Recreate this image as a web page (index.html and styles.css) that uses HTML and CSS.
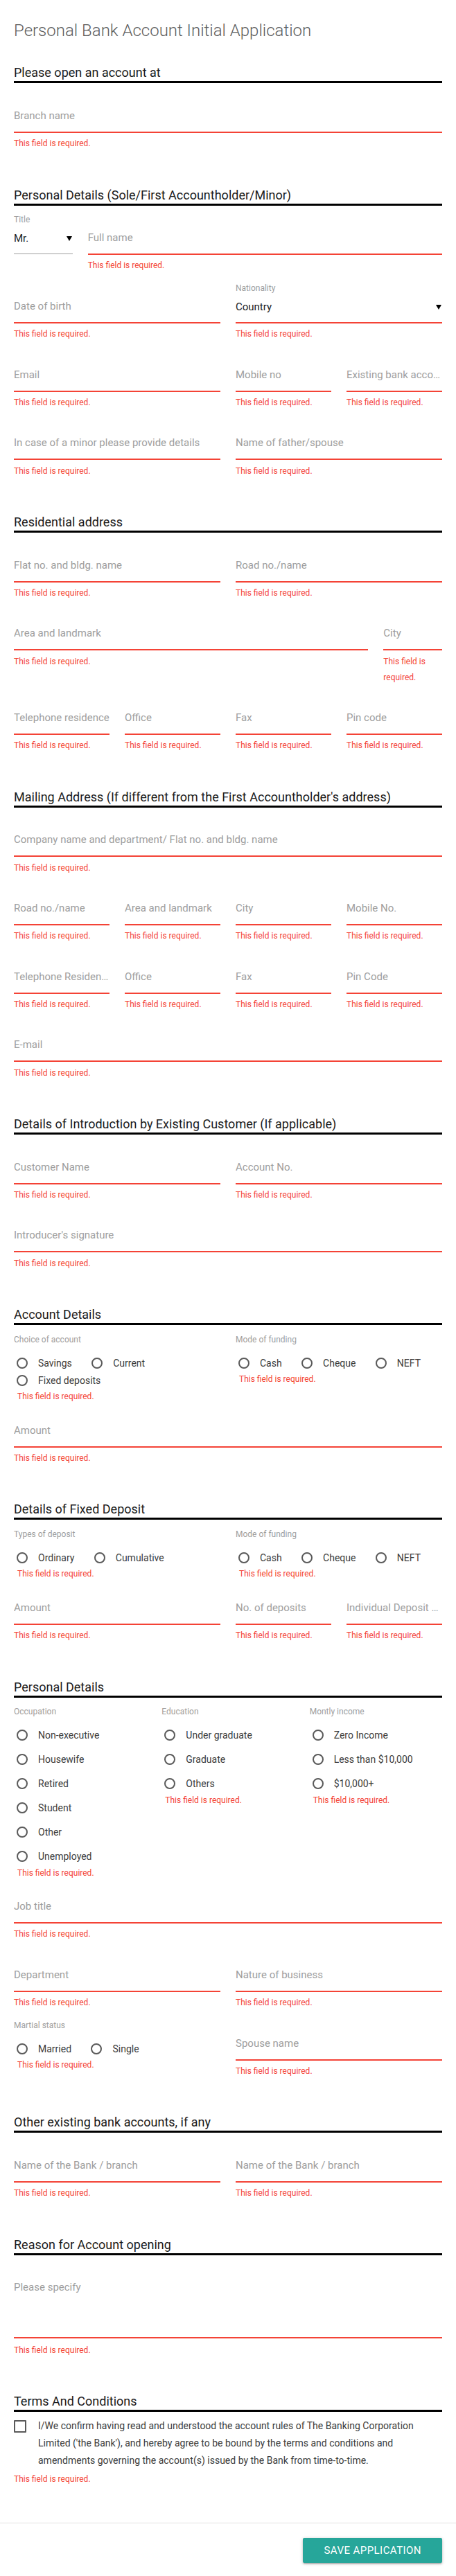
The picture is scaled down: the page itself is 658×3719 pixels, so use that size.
FILE: index.html
```html
<!DOCTYPE html>
<html lang="en">
<head>
<meta charset="utf-8">
<title>Personal Bank Account Initial Application</title>
<link rel="stylesheet" href="styles.css">
</head>
<body>
<form class="modal" novalidate>
  <div class="content">
    <h1 class="title">Personal Bank Account Initial Application</h1>

    <h2 class="section first">Please open an account at</h2>
    <div class="row">
      <div class="field s12">
        <div class="ctl"><input id="branch" type="text"><label for="branch">Branch name</label></div>
        <span class="help">This field is required.</span>
      </div>
    </div>

    <h2 class="section">Personal Details (Sole/First Accountholder/Minor)</h2>
    <div class="row">
      <div class="field select s2">
        <span class="small">Title</span>
        <div class="ctl sel"><span class="value">Mr.</span><svg class="caret" width="8" height="7" viewBox="0 0 8 7"><polygon points="0,0 8,0 4,7"/></svg></div>
      </div>
      <div class="field s10">
        <div class="ctl"><input id="fullname" type="text"><label for="fullname">Full name</label></div>
        <span class="help">This field is required.</span>
      </div>
    </div>
    <div class="row">
      <div class="field s6">
        <div class="ctl"><input id="dob" type="text"><label for="dob">Date of birth</label></div>
        <span class="help">This field is required.</span>
      </div>
      <div class="field select s6">
        <span class="small">Nationality</span>
        <div class="ctl sel invalid"><span class="value">Country</span><svg class="caret" width="8" height="7" viewBox="0 0 8 7"><polygon points="0,0 8,0 4,7"/></svg></div>
        <span class="help">This field is required.</span>
      </div>
    </div>
    <div class="row">
      <div class="field s6">
        <div class="ctl"><input id="email" type="text"><label for="email">Email</label></div>
        <span class="help">This field is required.</span>
      </div>
      <div class="field s3">
        <div class="ctl"><input id="mobile" type="text"><label for="mobile">Mobile no</label></div>
        <span class="help">This field is required.</span>
      </div>
      <div class="field s3">
        <div class="ctl"><input id="existing" type="text"><label for="existing">Existing bank account number</label></div>
        <span class="help">This field is required.</span>
      </div>
    </div>
    <div class="row">
      <div class="field s6">
        <div class="ctl"><input id="minor" type="text"><label for="minor">In case of a minor please provide details</label></div>
        <span class="help">This field is required.</span>
      </div>
      <div class="field s6">
        <div class="ctl"><input id="father" type="text"><label for="father">Name of father/spouse</label></div>
        <span class="help">This field is required.</span>
      </div>
    </div>

    <h2 class="section">Residential address</h2>
    <div class="row">
      <div class="field s6">
        <div class="ctl"><input id="flat" type="text"><label for="flat">Flat no. and bldg. name</label></div>
        <span class="help">This field is required.</span>
      </div>
      <div class="field s6">
        <div class="ctl"><input id="road" type="text"><label for="road">Road no./name</label></div>
        <span class="help">This field is required.</span>
      </div>
    </div>
    <div class="row">
      <div class="field s10">
        <div class="ctl"><input id="area" type="text"><label for="area">Area and landmark</label></div>
        <span class="help">This field is required.</span>
      </div>
      <div class="field s2">
        <div class="ctl"><input id="city" type="text"><label for="city">City</label></div>
        <span class="help">This field is required.</span>
      </div>
    </div>
    <div class="row">
      <div class="field s3">
        <div class="ctl"><input id="telres" type="text"><label for="telres">Telephone residence</label></div>
        <span class="help">This field is required.</span>
      </div>
      <div class="field s3">
        <div class="ctl"><input id="office" type="text"><label for="office">Office</label></div>
        <span class="help">This field is required.</span>
      </div>
      <div class="field s3">
        <div class="ctl"><input id="fax" type="text"><label for="fax">Fax</label></div>
        <span class="help">This field is required.</span>
      </div>
      <div class="field s3">
        <div class="ctl"><input id="pin" type="text"><label for="pin">Pin code</label></div>
        <span class="help">This field is required.</span>
      </div>
    </div>

    <h2 class="section">Mailing Address (If different from the First Accountholder's address)</h2>
    <div class="row">
      <div class="field s12">
        <div class="ctl"><input id="company" type="text"><label for="company">Company name and department/ Flat no. and bldg. name</label></div>
        <span class="help">This field is required.</span>
      </div>
    </div>
    <div class="row">
      <div class="field s3">
        <div class="ctl"><input id="m-road" type="text"><label for="m-road">Road no./name</label></div>
        <span class="help">This field is required.</span>
      </div>
      <div class="field s3">
        <div class="ctl"><input id="m-area" type="text"><label for="m-area">Area and landmark</label></div>
        <span class="help">This field is required.</span>
      </div>
      <div class="field s3">
        <div class="ctl"><input id="m-city" type="text"><label for="m-city">City</label></div>
        <span class="help">This field is required.</span>
      </div>
      <div class="field s3">
        <div class="ctl"><input id="m-mobile" type="text"><label for="m-mobile">Mobile No.</label></div>
        <span class="help">This field is required.</span>
      </div>
    </div>
    <div class="row">
      <div class="field s3">
        <div class="ctl"><input id="m-tel" type="text"><label for="m-tel">Telephone Residence</label></div>
        <span class="help">This field is required.</span>
      </div>
      <div class="field s3">
        <div class="ctl"><input id="m-office" type="text"><label for="m-office">Office</label></div>
        <span class="help">This field is required.</span>
      </div>
      <div class="field s3">
        <div class="ctl"><input id="m-fax" type="text"><label for="m-fax">Fax</label></div>
        <span class="help">This field is required.</span>
      </div>
      <div class="field s3">
        <div class="ctl"><input id="m-pin" type="text"><label for="m-pin">Pin Code</label></div>
        <span class="help">This field is required.</span>
      </div>
    </div>
    <div class="row">
      <div class="field s12">
        <div class="ctl"><input id="m-email" type="text"><label for="m-email">E-mail</label></div>
        <span class="help">This field is required.</span>
      </div>
    </div>

    <h2 class="section">Details of Introduction by Existing Customer (If applicable)</h2>
    <div class="row">
      <div class="field s6">
        <div class="ctl"><input id="cust" type="text"><label for="cust">Customer Name</label></div>
        <span class="help">This field is required.</span>
      </div>
      <div class="field s6">
        <div class="ctl"><input id="accno" type="text"><label for="accno">Account No.</label></div>
        <span class="help">This field is required.</span>
      </div>
    </div>
    <div class="row">
      <div class="field s12">
        <div class="ctl"><input id="intro" type="text"><label for="intro">Introducer's signature</label></div>
        <span class="help">This field is required.</span>
      </div>
    </div>

    <h2 class="section">Account Details</h2>
    <div class="row">
      <div class="group s6">
        <span class="small">Choice of account</span>
        <div class="options">
          <label class="radio"><input type="radio" name="choice"><span>Savings</span></label>
          <label class="radio"><input type="radio" name="choice"><span>Current</span></label>
          <label class="radio"><input type="radio" name="choice"><span>Fixed deposits</span></label>
        </div>
        <span class="help">This field is required.</span>
      </div>
      <div class="group s6">
        <span class="small">Mode of funding</span>
        <div class="options">
          <label class="radio"><input type="radio" name="funding"><span>Cash</span></label>
          <label class="radio"><input type="radio" name="funding"><span>Cheque</span></label>
          <label class="radio"><input type="radio" name="funding"><span>NEFT</span></label>
        </div>
        <span class="help">This field is required.</span>
      </div>
    </div>
    <div class="row">
      <div class="field s12">
        <div class="ctl"><input id="amount" type="text"><label for="amount">Amount</label></div>
        <span class="help">This field is required.</span>
      </div>
    </div>

    <h2 class="section">Details of Fixed Deposit</h2>
    <div class="row">
      <div class="group s6">
        <span class="small">Types of deposit</span>
        <div class="options">
          <label class="radio"><input type="radio" name="deptype"><span>Ordinary</span></label>
          <label class="radio"><input type="radio" name="deptype"><span>Cumulative</span></label>
        </div>
        <span class="help">This field is required.</span>
      </div>
      <div class="group s6">
        <span class="small">Mode of funding</span>
        <div class="options">
          <label class="radio"><input type="radio" name="fd-funding"><span>Cash</span></label>
          <label class="radio"><input type="radio" name="fd-funding"><span>Cheque</span></label>
          <label class="radio"><input type="radio" name="fd-funding"><span>NEFT</span></label>
        </div>
        <span class="help">This field is required.</span>
      </div>
    </div>
    <div class="row">
      <div class="field s6">
        <div class="ctl"><input id="fd-amount" type="text"><label for="fd-amount">Amount</label></div>
        <span class="help">This field is required.</span>
      </div>
      <div class="field s3">
        <div class="ctl"><input id="fd-count" type="text"><label for="fd-count">No. of deposits</label></div>
        <span class="help">This field is required.</span>
      </div>
      <div class="field s3">
        <div class="ctl"><input id="fd-each" type="text"><label for="fd-each">Individual Deposit Amount</label></div>
        <span class="help">This field is required.</span>
      </div>
    </div>

    <h2 class="section">Personal Details</h2>
    <div class="row">
      <div class="group s4">
        <span class="small">Occupation</span>
        <div class="options stack">
          <label class="radio"><input type="radio" name="occ"><span>Non-executive</span></label>
          <label class="radio"><input type="radio" name="occ"><span>Housewife</span></label>
          <label class="radio"><input type="radio" name="occ"><span>Retired</span></label>
          <label class="radio"><input type="radio" name="occ"><span>Student</span></label>
          <label class="radio"><input type="radio" name="occ"><span>Other</span></label>
          <label class="radio"><input type="radio" name="occ"><span>Unemployed</span></label>
        </div>
        <span class="help">This field is required.</span>
      </div>
      <div class="group s4">
        <span class="small">Education</span>
        <div class="options stack">
          <label class="radio"><input type="radio" name="edu"><span>Under graduate</span></label>
          <label class="radio"><input type="radio" name="edu"><span>Graduate</span></label>
          <label class="radio"><input type="radio" name="edu"><span>Others</span></label>
        </div>
        <span class="help">This field is required.</span>
      </div>
      <div class="group s4">
        <span class="small">Montly income</span>
        <div class="options stack">
          <label class="radio"><input type="radio" name="income"><span>Zero Income</span></label>
          <label class="radio"><input type="radio" name="income"><span>Less than $10,000</span></label>
          <label class="radio"><input type="radio" name="income"><span>$10,000+</span></label>
        </div>
        <span class="help">This field is required.</span>
      </div>
    </div>
    <div class="row">
      <div class="field s12">
        <div class="ctl"><input id="job" type="text"><label for="job">Job title</label></div>
        <span class="help">This field is required.</span>
      </div>
    </div>
    <div class="row">
      <div class="field s6">
        <div class="ctl"><input id="dept" type="text"><label for="dept">Department</label></div>
        <span class="help">This field is required.</span>
      </div>
      <div class="field s6">
        <div class="ctl"><input id="business" type="text"><label for="business">Nature of business</label></div>
        <span class="help">This field is required.</span>
      </div>
    </div>
    <div class="row">
      <div class="group s6">
        <span class="small">Martial status</span>
        <div class="options">
          <label class="radio"><input type="radio" name="marital"><span>Married</span></label>
          <label class="radio"><input type="radio" name="marital"><span>Single</span></label>
        </div>
        <span class="help">This field is required.</span>
      </div>
      <div class="field s6">
        <div class="ctl"><input id="spouse" type="text"><label for="spouse">Spouse name</label></div>
        <span class="help">This field is required.</span>
      </div>
    </div>

    <h2 class="section">Other existing bank accounts, if any</h2>
    <div class="row">
      <div class="field s6">
        <div class="ctl"><input id="bank1" type="text"><label for="bank1">Name of the Bank / branch</label></div>
        <span class="help">This field is required.</span>
      </div>
      <div class="field s6">
        <div class="ctl"><input id="bank2" type="text"><label for="bank2">Name of the Bank / branch</label></div>
        <span class="help">This field is required.</span>
      </div>
    </div>

    <h2 class="section">Reason for Account opening</h2>
    <div class="row">
      <div class="field s12">
        <div class="ctl area"><textarea id="reason"></textarea><label for="reason">Please specify</label></div>
        <span class="help">This field is required.</span>
      </div>
    </div>

    <h2 class="section">Terms And Conditions</h2>
    <div class="terms">
      <label class="check">
        <input type="checkbox">
        <span>I/We confirm having read and understood the account rules of The Banking Corporation Limited ('the Bank'), and hereby agree to be bound by the terms and conditions and amendments governing the account(s) issued by the Bank from time-to-time.</span>
      </label>
      <span class="help">This field is required.</span>
    </div>
  </div>

  <div class="footer">
    <button type="button" class="btn">Save Application</button>
  </div>
</form>
</body>
</html>
```

FILE: styles.css
```css
* {
  box-sizing: border-box;
}

html, body {
  margin: 0;
  padding: 0;
  background: #ffffff;
}

body {
  font-family: Roboto, "Liberation Sans", Arial, sans-serif;
  color: #212121;
}

.modal {
  margin: 0;
  background: #ffffff;
}

.content {
  padding: 28px 20px 0;
}

.title {
  margin: 0;
  font-size: 24px;
  line-height: 32px;
  font-weight: 300;
  color: #5e5e5e;
}

.section {
  margin: 50.6px 0 0;
  font-size: 18px;
  line-height: 24px;
  font-weight: 400;
  color: #1b1b1b;
  border-bottom: 3px solid #000000;
}

.section.first {
  margin-top: 33.3px;
}

/* grid */
.row {
  display: grid;
  grid-template-columns: repeat(12, minmax(0, 1fr));
  column-gap: 22px;
  align-items: start;
}

.s2 { grid-column: span 2; }
.s3 { grid-column: span 3; }
.s4 { grid-column: span 4; }
.s6 { grid-column: span 6; }
.s10 { grid-column: span 10; }
.s12 { grid-column: span 12; }

/* text fields */
.field {
  padding-top: 24.4px;
  min-width: 0;
}

.field.select {
  padding-top: 14.5px;
}

.ctl {
  display: grid;
  grid-template-columns: minmax(0, 1fr);
  height: 46px;
  border-bottom: 1px solid #f44336;
  box-shadow: 0 1px 0 0 #f44336;
}

.ctl > input,
.ctl > textarea,
.ctl > label {
  grid-area: 1 / 1;
}

.ctl input,
.ctl textarea {
  width: 100%;
  height: 45px;
  margin: 0;
  padding: 0;
  border: 0;
  outline: 0;
  background: transparent;
  font: inherit;
  font-size: 15px;
  color: #212121;
  resize: none;
}

.ctl label {
  min-width: 0;
  height: 45px;
  line-height: 45px;
  font-size: 15px;
  color: #9e9e9e;
  white-space: nowrap;
  overflow: hidden;
  text-overflow: ellipsis;
  pointer-events: none;
}

.ctl.area {
  height: 94.6px;
}

.ctl.area textarea {
  height: 93.6px;
}

.ctl.area label {
  align-self: start;
}

.ctl.sel {
  display: flex;
  align-items: center;
  justify-content: space-between;
  height: 44.2px;
  border-bottom: 1px solid #9e9e9e;
  box-shadow: none;
}

.ctl.sel.invalid {
  border-bottom-color: #f44336;
  box-shadow: 0 1px 0 0 #f44336;
}

.value {
  font-size: 15px;
  line-height: 43.2px;
  color: #212121;
}

.caret {
  display: block;
  margin-right: 1px;
  fill: #000000;
}

.small {
  display: block;
  font-size: 12px;
  line-height: 12px;
  color: #9e9e9e;
  white-space: nowrap;
}

.help {
  display: block;
  margin-top: 5.3px;
  font-size: 12px;
  line-height: 23px;
  color: #f44336;
}

.area + .help {
  margin-top: 7px;
}

/* radio groups */
.group {
  padding-top: 14.5px;
  margin-bottom: -10px;
  min-width: 0;
}

.options {
  display: flex;
  flex-wrap: wrap;
  column-gap: 24.4px;
  margin-top: 15.5px;
}

.options.stack {
  flex-direction: column;
  flex-wrap: nowrap;
  row-gap: 10px;
}

.radio {
  display: flex;
  align-items: center;
  height: 25px;
  font-size: 14px;
  color: #3c3c3c;
  white-space: nowrap;
}

.radio input {
  -webkit-appearance: none;
  appearance: none;
  flex: none;
  width: 16px;
  height: 16px;
  margin: 0 15px 0 4px;
  border: 2px solid #5a5a5a;
  border-radius: 50%;
  background: transparent;
}

.group .help {
  margin: 0 0 0 5px;
}

/* terms */
.terms {
  padding-top: 8px;
}

.check {
  display: flex;
  align-items: flex-start;
  font-size: 14px;
  line-height: 25px;
  color: #3c3c3c;
}

.check input {
  -webkit-appearance: none;
  appearance: none;
  flex: none;
  width: 18px;
  height: 18px;
  margin: 4px 17px 0 0;
  border: 2px solid #5a5a5a;
  border-radius: 1px;
  background: transparent;
}

.terms .help {
  margin-top: 2.7px;
}

/* footer */
.footer {
  margin-top: 51px;
  padding: 21px 20px 20px;
  border-top: 1px solid #e0e0e0;
  border-bottom: 1px solid #d6d6d6;
  display: flex;
  justify-content: flex-end;
}

.btn {
  height: 36px;
  padding: 0 30px;
  border: 0;
  border-radius: 2px;
  background: #26a69a;
  color: #ffffff;
  font-family: inherit;
  font-size: 15px;
  letter-spacing: 0.45px;
  text-transform: uppercase;
  box-shadow: 0 2px 2px 0 rgba(0, 0, 0, 0.14), 0 3px 1px -2px rgba(0, 0, 0, 0.12), 0 1px 5px 0 rgba(0, 0, 0, 0.2);
  cursor: pointer;
}
```
